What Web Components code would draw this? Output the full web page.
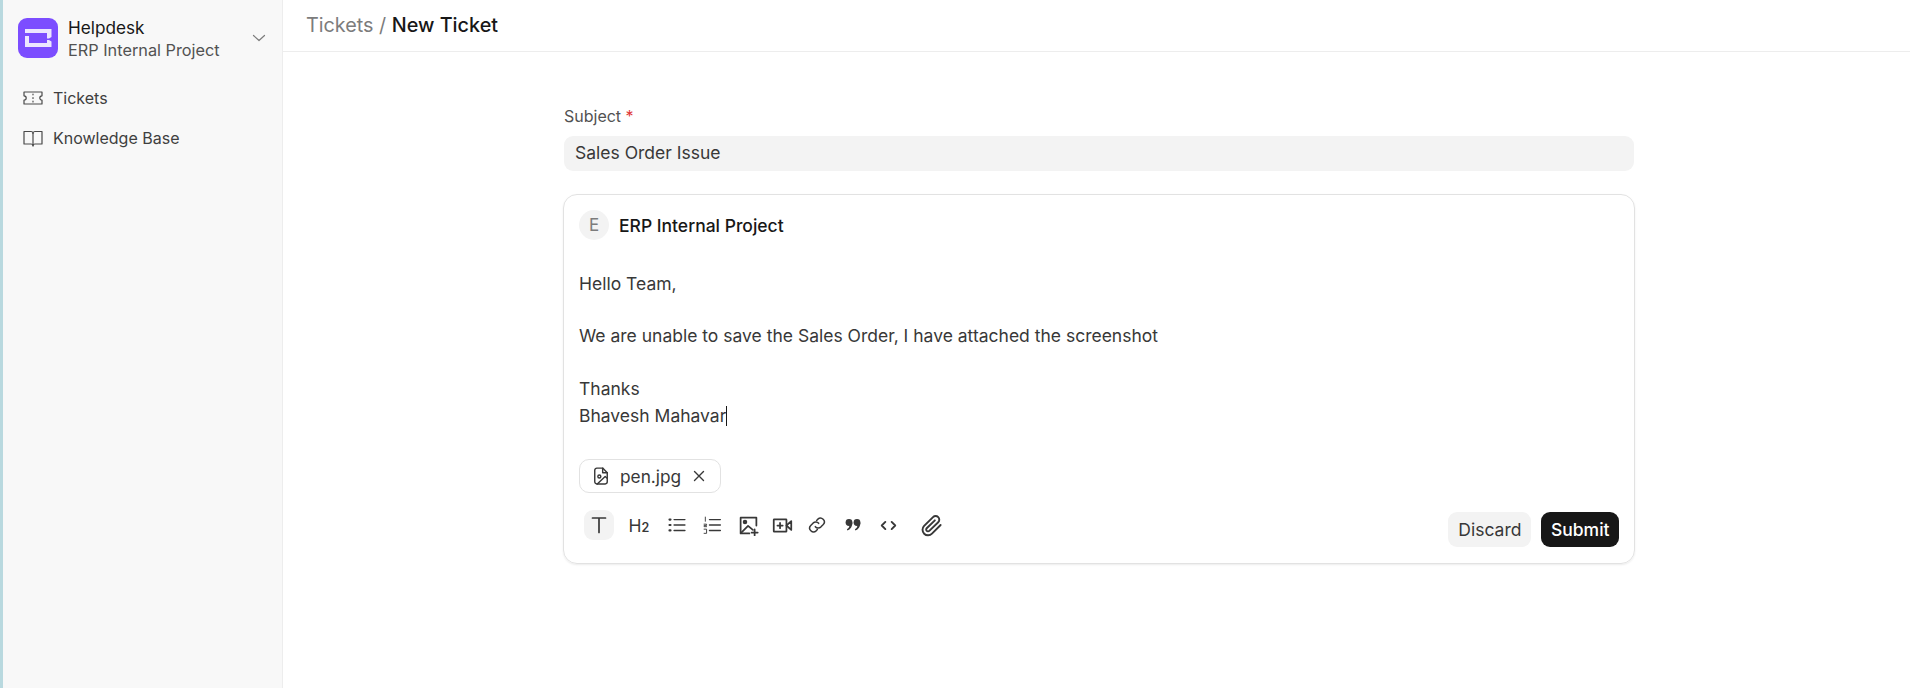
<!DOCTYPE html>
<html><head><meta charset="utf-8"><title>Helpdesk</title>
<style>
html,body{margin:0;height:100%;background:#fff;font-family:Inter,"Liberation Sans",sans-serif;overflow:hidden}
hd-app{height:688px}
</style></head><body>
<hd-app></hd-app>
<script>
const def=(name,html)=>customElements.define(name,class extends HTMLElement{
  constructor(){super();this.attachShadow({mode:'open'}).innerHTML=html;}
});
const ic=(d,s=20,sw=1.5)=>`<svg width="${s}" height="${s}" viewBox="0 0 24 24" fill="none" stroke="currentColor" stroke-width="${sw}" stroke-linecap="round" stroke-linejoin="round">${d}</svg>`;

def('nav-item',`<style>
:host{display:flex;align-items:center;gap:10px;height:36px;padding-left:20px;font-size:16px;color:#3f3f3f}
</style><slot name="icon"></slot><slot></slot>`);

def('hd-sidebar',`<style>
:host{display:block;width:279px;flex:none;background:#f8f8f8;border-right:1px solid #ededed}
.brand{display:flex;align-items:center;padding:18px 0 0 15px;height:40px}
.logo{width:40px;height:40px;flex:none;display:block}
.txt{margin-left:10px;flex:1;display:flex;flex-direction:column;gap:2px}
.t1{font-size:17.2px;line-height:21px;font-weight:430;color:#171717}
.t2{font-size:16.3px;line-height:20px;color:#525252;white-space:nowrap}
.chev{margin-right:15px;color:#7c7c7c;display:block}
nav{display:flex;flex-direction:column;gap:4px;margin-top:22px}
</style>
<div class="brand">
<svg class="logo" viewBox="0 0 40 40"><rect width="40" height="40" rx="9" fill="#7c4dff"/><path fill="#ece6ff" d="M7 11H33.500V19L31 20.500H29V15H7Z M7 18H11V25H29V22H31L33.500 23.500V29H7Z"/></svg>
<div class="txt"><div class="t1">Helpdesk</div><div class="t2">ERP Internal Project</div></div>
<svg class="chev" width="16" height="16" viewBox="0 0 16 16" fill="none" stroke="currentColor" stroke-width="1.2" stroke-linecap="round" stroke-linejoin="round"><path d="M2.500 5.500L8 10.500L13.500 5.500"/></svg>
</div>
<nav><slot></slot></nav>`);

def('hd-header',`<style>
:host{display:flex;align-items:center;height:49px;padding-bottom:2px;border-bottom:1px solid #ededed;padding-left:23px;font-size:19.8px}
.a{color:#7c7c7c}.b{color:#171717;font-weight:450}
</style><span class="a">Tickets /&nbsp;</span><span class="b">New Ticket</span>`);

def('hd-field',`<style>
:host{display:block}
label{display:block;font-size:16px;line-height:19px;color:#525252;margin-bottom:10px}
i{font-style:normal;color:#e03636}
.in{height:35px;background:#f3f3f3;border-radius:9px;display:flex;align-items:center;padding-left:11px;padding-bottom:2px;box-sizing:border-box;font-size:17.5px;color:#383838}
</style><label>Subject <i>*</i></label><div class="in">Sales Order Issue</div>`);

def('hd-chip',`<style>
:host{display:inline-flex;align-items:center;height:34px;border:1px solid #e2e2e2;border-radius:10px;box-sizing:border-box;padding:0 13px 0 11px;font-size:17.3px;color:#383838;gap:9px}
svg{display:block;color:#383838}
</style>
<svg width="20" height="20" viewBox="0 0 24 24" fill="none" stroke="currentColor" stroke-width="1.7" stroke-linecap="round" stroke-linejoin="round"><path d="M14 2.500H7a2.500 2.500 0 0 0-2.500 2.500v14A2.500 2.500 0 0 0 7 21.500h10a2.500 2.500 0 0 0 2.500-2.500V8z"/><path d="M14 2.500V8h5.500"/><circle cx="10" cy="12.500" r="1.800"/><path d="M19 14.500l-2-2L7.500 21.500"/></svg>
<span>pen.jpg</span>
<svg width="16" height="16" viewBox="0 0 16 16" fill="none" stroke="currentColor" stroke-width="1.4" stroke-linecap="round" style="margin-left:1px"><path d="M3.500 3.500l9 9M12.500 3.500l-9 9"/></svg>`);

def('hd-tool',`<style>
:host{display:flex;align-items:center;justify-content:center;width:30px;height:30px;border-radius:9px;color:#383838;flex:none}
:host([on]){background:#f3f3f3}
</style><slot></slot>`);

def('hd-btn',`<style>
:host{display:inline-flex;align-items:center;justify-content:center;height:35px;border-radius:9px;font-size:17.5px;background:#f3f3f3;color:#383838;padding:0 10px}
:host([solid]){background:#171717;color:#fff;font-weight:500;padding:0 9.500px}
</style><slot></slot>`);

def('hd-card',`<style>
:host{display:flex;flex-direction:column;margin-top:23px;height:370px;box-sizing:border-box;border:1px solid #e2e2e2;border-radius:14px;box-shadow:0 1px 2px rgba(0,0,0,.08);padding:15px;margin-left:-1px;margin-right:-1px}
.to{display:flex;align-items:center;gap:10px}
.av{width:30px;height:30px;border-radius:50%;background:#f3f3f3;color:#7c7c7c;font-size:17px;display:flex;align-items:center;justify-content:center}
.name{font-size:17.5px;font-weight:450;color:#171717}
.body{margin-top:30.500px;font-size:17.5px;line-height:26.4px;color:#383838}
.body p{margin:0}
.caret{display:inline-block;width:1px;height:20px;background:#171717;vertical-align:-4px}
.chips{margin-top:30.500px;display:flex}
.bar{display:flex;margin-top:17px}
.tools{display:flex;gap:5px;padding-left:5px;align-items:flex-start}
.acts{margin-left:auto;display:flex;gap:10px;padding-top:2px}
</style>
<div class="to"><div class="av">E</div><div class="name">ERP Internal Project</div></div>
<div class="body"><p>Hello Team,</p><p>&nbsp;</p><p>We are unable to save the Sales Order, I have attached the screenshot</p><p>&nbsp;</p><p>Thanks</p><p>Bhavesh Mahavar<span class="caret"></span></p></div>
<div class="chips"><slot name="chips"></slot></div>
<div class="bar"><div class="tools"><slot name="tools"></slot></div><div class="acts"><slot name="acts"></slot></div></div>`);

def('hd-app',`<style>
:host{display:flex;width:1910px;height:688px;background:#fff}
.strip{width:3px;flex:none;background:#b9d9df}
.main{flex:1;min-width:0;display:flex;flex-direction:column}
.form{width:1070px;margin:55px 0 0 281px}
</style>
<div class="strip"></div>
<slot name="side"></slot>
<div class="main"><slot name="head"></slot><div class="form"><slot></slot></div></div>`);

const app=document.querySelector('hd-app');
const g=`<span slot="icon" style="display:flex;color:#4a4a4a">`;
app.innerHTML=`
<hd-sidebar slot="side">
 <nav-item>${g}<svg width="20" height="20" viewBox="0 0 20 20" fill="none" stroke="currentColor" stroke-width="1.200" stroke-linejoin="round" stroke-linecap="round"><path d="M1 4h18v3.800a2.200 2.200 0 0 0 0 4.400V16H1v-3.800a2.200 2.200 0 0 0 0-4.400z"/><path d="M10 6v.8M10 9.600v.8M10 13.200v.8"/></svg></span>Tickets</nav-item>
 <nav-item>${g}<svg width="20" height="20" viewBox="0 0 20 20" fill="none" stroke="currentColor" stroke-width="1.200" stroke-linejoin="round" stroke-linecap="round"><path d="M1 3.500H8a2 2 0 0 1 2 2 2 2 0 0 1 2-2h7v12.500H12a2 2 0 0 0-2 1.700A2 2 0 0 0 8 16H1z"/><path d="M10 5.500v12.500"/></svg></span>Knowledge Base</nav-item>
</hd-sidebar>
<hd-header slot="head"></hd-header>
<hd-field></hd-field>
<hd-card>
 <hd-chip slot="chips"></hd-chip>
 <hd-tool slot="tools" on>${ic('<path d="M5.500 5h13M12 5v14.500"/>',24,1.700)}</hd-tool>
 <hd-tool slot="tools" style="margin-left:5px"><span style="font-size:17.500px;color:#383838">H<span style="font-size:12.500px;font-weight:600">2</span></span></hd-tool>
 <hd-tool slot="tools" style="margin-left:3px">${ic('<path d="M8.500 5.500h13M8.500 12h13M8.500 18.500h13"/><path d="M3 5.500h1.200M3 12h1.200M3 18.500h1.200" stroke-width="2.600"/>',20,1.700)}</hd-tool>
 <hd-tool slot="tools">${ic('<path d="M9 5.500h13M9 12h13M9 18.500h13"/><path d="M4 2.500v5M2.500 11h3v1.500h-3v1.500h3M2.500 17h3v5h-3" stroke-width="1.100"/>',20,1.700)}</hd-tool>
 <hd-tool slot="tools" style="margin-left:1px">${ic('<path d="M21 12V3H3v18h10"/><circle cx="8" cy="8" r="1.600" fill="currentColor"/><path d="M3.500 20.500l8-8 5.500 4.500"/><path d="M19 16.500v7M15.500 20h7"/>',21,2)}</hd-tool>
 <hd-tool slot="tools" style="margin-left:-1px">${ic('<rect x="2" y="5" width="14.500" height="14" rx=".5"/><path d="M9.200 9v6M6.200 12h6"/><path d="M16.500 12l5.500-5v10z"/>',21,2)}</hd-tool>
 <hd-tool slot="tools" style="margin-left:0">${ic('<path d="M10 14a4.500 4.500 0 0 0 6.500.5l3-3a4.600 4.600 0 0 0-6.500-6.500l-1.500 1.500"/><path d="M14 10a4.500 4.500 0 0 0-6.500-.5l-3 3a4.600 4.600 0 0 0 6.500 6.500l1.500-1.500"/>',20,1.800)}</hd-tool>
 <hd-tool slot="tools" style="margin-left:1px"><svg width="16" height="14" viewBox="0 0 16 14" fill="#383838"><circle cx="4" cy="4.500" r="3.400"/><circle cx="12" cy="4.500" r="3.400"/><path d="M7.400 4.500c0 4-2 7-5 8l-.5-1.200c1.500-.8 2.500-2 2.500-4zM15.400 4.500c0 4-2 7-5 8l-.5-1.200c1.500-.8 2.500-2 2.500-4z"/></svg></hd-tool>
 <hd-tool slot="tools">${ic('<path d="M8 7.500L3.500 12l4.500 4.500M16 7.500l4.500 4.500-4.500 4.500"/>',19,2.400)}</hd-tool>
 <hd-tool slot="tools" style="margin-left:8px">${ic('<path d="M21.500 11.500l-9 9a5.700 5.700 0 0 1-8.200-8.100l9.300-9.200a3.800 3.800 0 0 1 5.400 5.400l-9.300 9a1.900 1.900 0 0 1-2.700-2.700l8.500-8.300"/>',23,2)}</hd-tool>
 <hd-btn slot="acts">Discard</hd-btn>
 <hd-btn slot="acts" solid>Submit</hd-btn>
</hd-card>`;
</script>
</body></html>
